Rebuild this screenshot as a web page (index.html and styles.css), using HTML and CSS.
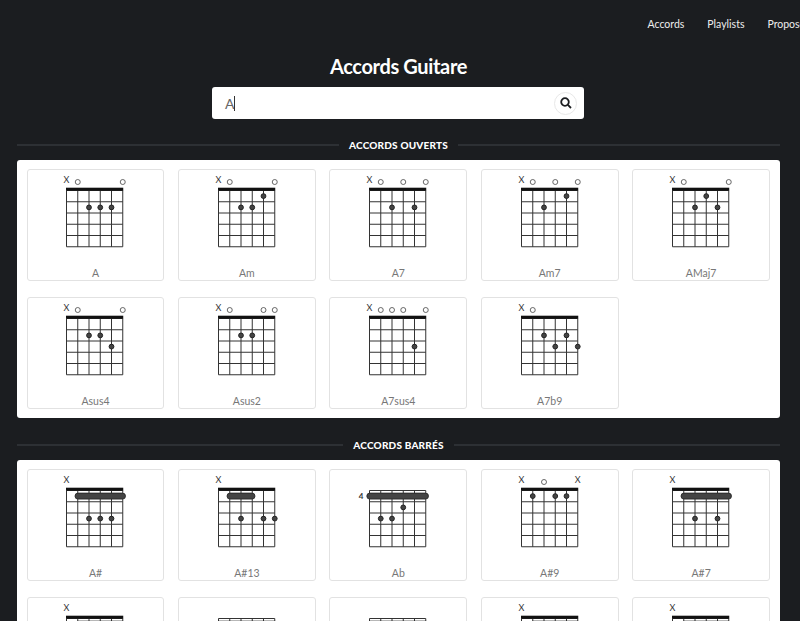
FILE: index.html
```html
<!DOCTYPE html>
<html lang="fr">
<head>
  <meta charset="UTF-8" />
  <meta name="viewport" content="width=device-width, initial-scale=1.0" />
  <title>Accords Guitare</title>
  <link rel="stylesheet" href="styles.css">
</head>
<body>
  <svg class="defs">
    <symbol id="grid" viewBox="0 0 90 80" width="90" height="80">
      <path class="frets" d="M16.5 20.5H72.75M16.5 31.75H72.75M16.5 43H72.75M16.5 54.25H72.75M16.5 65.5H72.75M16.5 76.75H72.75M16.5 20.5V76.75M27.75 20.5V76.75M39 20.5V76.75M50.25 20.5V76.75M61.5 20.5V76.75M72.75 20.5V76.75" />
    </symbol>
  </svg>

  <nav class="topnav">
    <a href="#">Accords</a>
    <a href="#">Playlists</a>
    <a href="#">Proposer</a>
  </nav>

  <h1 class="title">Accords Guitare</h1>

  <div class="search">
    <span class="search-value">A</span><span class="caret"></span>
    <button class="search-btn" aria-label="Rechercher">
      <svg viewBox="0 0 12 12" width="12" height="12"><circle cx="5" cy="5" r="3.8" /><path d="M7.9 7.9L11 11" /></svg>
    </button>
  </div>

  <h2 class="section-title"><span>ACCORDS OUVERTS</span></h2>
  <section class="panel">
    <div class="chords">
      <div class="chord">
        <svg viewBox="0 0 90 80"><use href="#grid" /><rect class="nut" x="16" y="17.7" width="57.25" height="3" /><text x="16.5" y="13">X</text><circle class="open" cx="27.75" cy="12" r="2.5" /><circle class="open" cx="72.75" cy="12" r="2.5" /><circle class="dot" cx="39" cy="37.4" r="2.4" /><circle class="dot" cx="50.25" cy="37.4" r="2.4" /><circle class="dot" cx="61.5" cy="37.4" r="2.4" /></svg>
        <p>A</p>
      </div>
      <div class="chord">
        <svg viewBox="0 0 90 80"><use href="#grid" /><rect class="nut" x="16" y="17.7" width="57.25" height="3" /><text x="16.5" y="13">X</text><circle class="open" cx="27.75" cy="12" r="2.5" /><circle class="open" cx="72.75" cy="12" r="2.5" /><circle class="dot" cx="61.5" cy="26.1" r="2.4" /><circle class="dot" cx="39" cy="37.4" r="2.4" /><circle class="dot" cx="50.25" cy="37.4" r="2.4" /></svg>
        <p>Am</p>
      </div>
      <div class="chord">
        <svg viewBox="0 0 90 80"><use href="#grid" /><rect class="nut" x="16" y="17.7" width="57.25" height="3" /><text x="16.5" y="13">X</text><circle class="open" cx="27.75" cy="12" r="2.5" /><circle class="open" cx="50.25" cy="12" r="2.5" /><circle class="open" cx="72.75" cy="12" r="2.5" /><circle class="dot" cx="39" cy="37.4" r="2.4" /><circle class="dot" cx="61.5" cy="37.4" r="2.4" /></svg>
        <p>A7</p>
      </div>
      <div class="chord">
        <svg viewBox="0 0 90 80"><use href="#grid" /><rect class="nut" x="16" y="17.7" width="57.25" height="3" /><text x="16.5" y="13">X</text><circle class="open" cx="27.75" cy="12" r="2.5" /><circle class="open" cx="50.25" cy="12" r="2.5" /><circle class="open" cx="72.75" cy="12" r="2.5" /><circle class="dot" cx="61.5" cy="26.1" r="2.4" /><circle class="dot" cx="39" cy="37.4" r="2.4" /></svg>
        <p>Am7</p>
      </div>
      <div class="chord">
        <svg viewBox="0 0 90 80"><use href="#grid" /><rect class="nut" x="16" y="17.7" width="57.25" height="3" /><text x="16.5" y="13">X</text><circle class="open" cx="27.75" cy="12" r="2.5" /><circle class="open" cx="72.75" cy="12" r="2.5" /><circle class="dot" cx="50.25" cy="26.1" r="2.4" /><circle class="dot" cx="39" cy="37.4" r="2.4" /><circle class="dot" cx="61.5" cy="37.4" r="2.4" /></svg>
        <p>AMaj7</p>
      </div>
      <div class="chord">
        <svg viewBox="0 0 90 80"><use href="#grid" /><rect class="nut" x="16" y="17.7" width="57.25" height="3" /><text x="16.5" y="13">X</text><circle class="open" cx="27.75" cy="12" r="2.5" /><circle class="open" cx="72.75" cy="12" r="2.5" /><circle class="dot" cx="39" cy="37.4" r="2.4" /><circle class="dot" cx="50.25" cy="37.4" r="2.4" /><circle class="dot" cx="61.5" cy="48.6" r="2.4" /></svg>
        <p>Asus4</p>
      </div>
      <div class="chord">
        <svg viewBox="0 0 90 80"><use href="#grid" /><rect class="nut" x="16" y="17.7" width="57.25" height="3" /><text x="16.5" y="13">X</text><circle class="open" cx="27.75" cy="12" r="2.5" /><circle class="open" cx="61.5" cy="12" r="2.5" /><circle class="open" cx="72.75" cy="12" r="2.5" /><circle class="dot" cx="39" cy="37.4" r="2.4" /><circle class="dot" cx="50.25" cy="37.4" r="2.4" /></svg>
        <p>Asus2</p>
      </div>
      <div class="chord">
        <svg viewBox="0 0 90 80"><use href="#grid" /><rect class="nut" x="16" y="17.7" width="57.25" height="3" /><text x="16.5" y="13">X</text><circle class="open" cx="27.75" cy="12" r="2.5" /><circle class="open" cx="39" cy="12" r="2.5" /><circle class="open" cx="50.25" cy="12" r="2.5" /><circle class="open" cx="72.75" cy="12" r="2.5" /><circle class="dot" cx="61.5" cy="48.6" r="2.4" /></svg>
        <p>A7sus4</p>
      </div>
      <div class="chord">
        <svg viewBox="0 0 90 80"><use href="#grid" /><rect class="nut" x="16" y="17.7" width="57.25" height="3" /><text x="16.5" y="13">X</text><circle class="open" cx="27.75" cy="12" r="2.5" /><circle class="dot" cx="39" cy="37.4" r="2.4" /><circle class="dot" cx="61.5" cy="37.4" r="2.4" /><circle class="dot" cx="50.25" cy="48.6" r="2.4" /><circle class="dot" cx="72.75" cy="48.6" r="2.4" /></svg>
        <p>A7b9</p>
      </div>
    </div>
  </section>

  <h2 class="section-title"><span>ACCORDS BARRÉS</span></h2>
  <section class="panel">
    <div class="chords">
      <div class="chord">
        <svg viewBox="0 0 90 80"><use href="#grid" /><rect class="nut" x="16" y="17.7" width="57.25" height="3" /><text x="16.5" y="13">X</text><rect class="barre" x="25" y="23.1" width="50.5" height="6" rx="3" /><circle class="dot" cx="39" cy="48.6" r="2.4" /><circle class="dot" cx="50.25" cy="48.6" r="2.4" /><circle class="dot" cx="61.5" cy="48.6" r="2.4" /></svg>
        <p>A#</p>
      </div>
      <div class="chord">
        <svg viewBox="0 0 90 80"><use href="#grid" /><rect class="nut" x="16" y="17.7" width="57.25" height="3" /><text x="16.5" y="13">X</text><rect class="barre" x="25" y="23.1" width="28" height="6" rx="3" /><circle class="dot" cx="39" cy="48.6" r="2.4" /><circle class="dot" cx="61.5" cy="48.6" r="2.4" /><circle class="dot" cx="72.75" cy="48.6" r="2.4" /></svg>
        <p>A#13</p>
      </div>
      <div class="chord">
        <svg viewBox="0 0 90 80"><use href="#grid" /><text class="fret-no" x="8" y="28.5">4</text><rect class="barre" x="13.8" y="23.1" width="61.7" height="6" rx="3" /><circle class="dot" cx="50.25" cy="37.4" r="2.4" /><circle class="dot" cx="27.75" cy="48.6" r="2.4" /><circle class="dot" cx="39" cy="48.6" r="2.4" /></svg>
        <p>Ab</p>
      </div>
      <div class="chord">
        <svg viewBox="0 0 90 80"><use href="#grid" /><rect class="nut" x="16" y="17.7" width="57.25" height="3" /><text x="16.5" y="13">X</text><circle class="open" cx="39" cy="12" r="2.5" /><text x="72.75" y="13">X</text><circle class="dot" cx="27.75" cy="26.1" r="2.4" /><circle class="dot" cx="50.25" cy="26.1" r="2.4" /><circle class="dot" cx="61.5" cy="26.1" r="2.4" /></svg>
        <p>A#9</p>
      </div>
      <div class="chord">
        <svg viewBox="0 0 90 80"><use href="#grid" /><rect class="nut" x="16" y="17.7" width="57.25" height="3" /><text x="16.5" y="13">X</text><rect class="barre" x="25" y="23.1" width="50.5" height="6" rx="3" /><circle class="dot" cx="39" cy="48.6" r="2.4" /><circle class="dot" cx="61.5" cy="48.6" r="2.4" /></svg>
        <p>A#7</p>
      </div>
      <!-- this row is cut off by the window, only the top of each diagram shows -->
      <div class="chord">
        <svg viewBox="0 0 90 80"><use href="#grid" /><rect class="nut" x="16" y="17.7" width="57.25" height="3" /><text x="16.5" y="13">X</text><rect class="barre" x="25" y="23.1" width="50.5" height="6" rx="3" /></svg>
      </div>
      <div class="chord">
        <svg viewBox="0 0 90 80"><use href="#grid" /><rect class="barre" x="13.8" y="23.1" width="61.7" height="6" rx="3" /></svg>
      </div>
      <div class="chord">
        <svg viewBox="0 0 90 80"><use href="#grid" /><rect class="barre" x="13.8" y="23.1" width="61.7" height="6" rx="3" /></svg>
      </div>
      <div class="chord">
        <svg viewBox="0 0 90 80"><use href="#grid" /><rect class="nut" x="16" y="17.7" width="57.25" height="3" /><text x="16.5" y="13">X</text><rect class="barre" x="25" y="23.1" width="50.5" height="6" rx="3" /></svg>
      </div>
      <div class="chord">
        <svg viewBox="0 0 90 80"><use href="#grid" /><rect class="nut" x="16" y="17.7" width="57.25" height="3" /><text x="16.5" y="13">X</text><rect class="barre" x="25" y="23.1" width="50.5" height="6" rx="3" /></svg>
      </div>
    </div>
  </section>
</body>
</html>
```
FILE: styles.css
```css
html {
  overflow: hidden;
}
body {
  margin: 0;
  padding: 0 20px 0 17px;
  background-color: #1b1d20;
  font-family: Lato, "Liberation Sans", sans-serif;
  color: #fff;
}
.defs {
  display: none;
}
.topnav {
  display: flex;
  justify-content: flex-end;
  align-items: center;
  gap: 23px;
  height: 47px;
  margin-right: -29px;
}
.topnav a {
  color: #eee;
  font-size: 10.5px;
  text-decoration: none;
}
.title {
  margin: 6px 0 8px;
  font-size: 20px;
  font-weight: 700;
  letter-spacing: -0.35px;
  line-height: 26px;
  text-align: center;
}
.search {
  display: flex;
  align-items: center;
  box-sizing: border-box;
  width: 372px;
  height: 32px;
  margin-left: 195px;
  padding: 0 7px 0 13px;
  background: #fff;
  border-radius: 3px;
  color: #666;
  font-size: 14px;
}
.caret {
  width: 1px;
  height: 15px;
  background: #333;
}
.search-btn {
  display: flex;
  align-items: center;
  justify-content: center;
  width: 23px;
  height: 23px;
  margin-left: auto;
  padding: 0;
  background: #fff;
  border: 1px solid #e8e8e8;
  border-radius: 50%;
}
.search-btn svg {
  fill: none;
  stroke: #1b1d20;
  stroke-width: 1.8;
}
.section-title {
  display: flex;
  align-items: center;
  gap: 10px;
  height: 16px;
  margin: 18px 0 7px;
  font-size: 10px;
  font-weight: 900;
  letter-spacing: 0.2px;
}
.section-title::before,
.section-title::after {
  content: "";
  flex: 1;
  height: 2px;
  background: #2d3034;
}
.panel {
  margin-bottom: 19px;
  padding: 9px 10px 9px 9.6px;
  background: #fff;
  border-radius: 3px;
}
.chords {
  display: grid;
  grid-template-columns: repeat(5, 1fr);
  gap: 16px 13.6px;
}
.chord {
  display: flex;
  flex-direction: column;
  box-sizing: border-box;
  height: 112px;
  background: #fff;
  border: 1px solid #e2e2e2;
  border-radius: 3px;
}
.chord svg {
  display: block;
  width: 90px;
  height: 80px;
  margin: 0 auto;
}
.chord p {
  margin: auto 0 0;
  color: #777;
  font-size: 10.5px;
  font-weight: 400;
  line-height: 14px;
  text-align: center;
}
.frets {
  fill: none;
  stroke: #333;
  stroke-width: 1;
}
.nut {
  fill: #111;
}
.dot {
  fill: #444;
  stroke: #222;
  stroke-width: 1;
}
.open {
  fill: #fff;
  stroke: #444;
  stroke-width: 0.8;
}
.barre {
  fill: #444;
  stroke: #222;
  stroke-width: 0.8;
}
.chord text {
  fill: #333;
  font-size: 9px;
  text-anchor: middle;
}
.chord .fret-no {
  font-size: 8px;
  font-weight: 700;
}
```
